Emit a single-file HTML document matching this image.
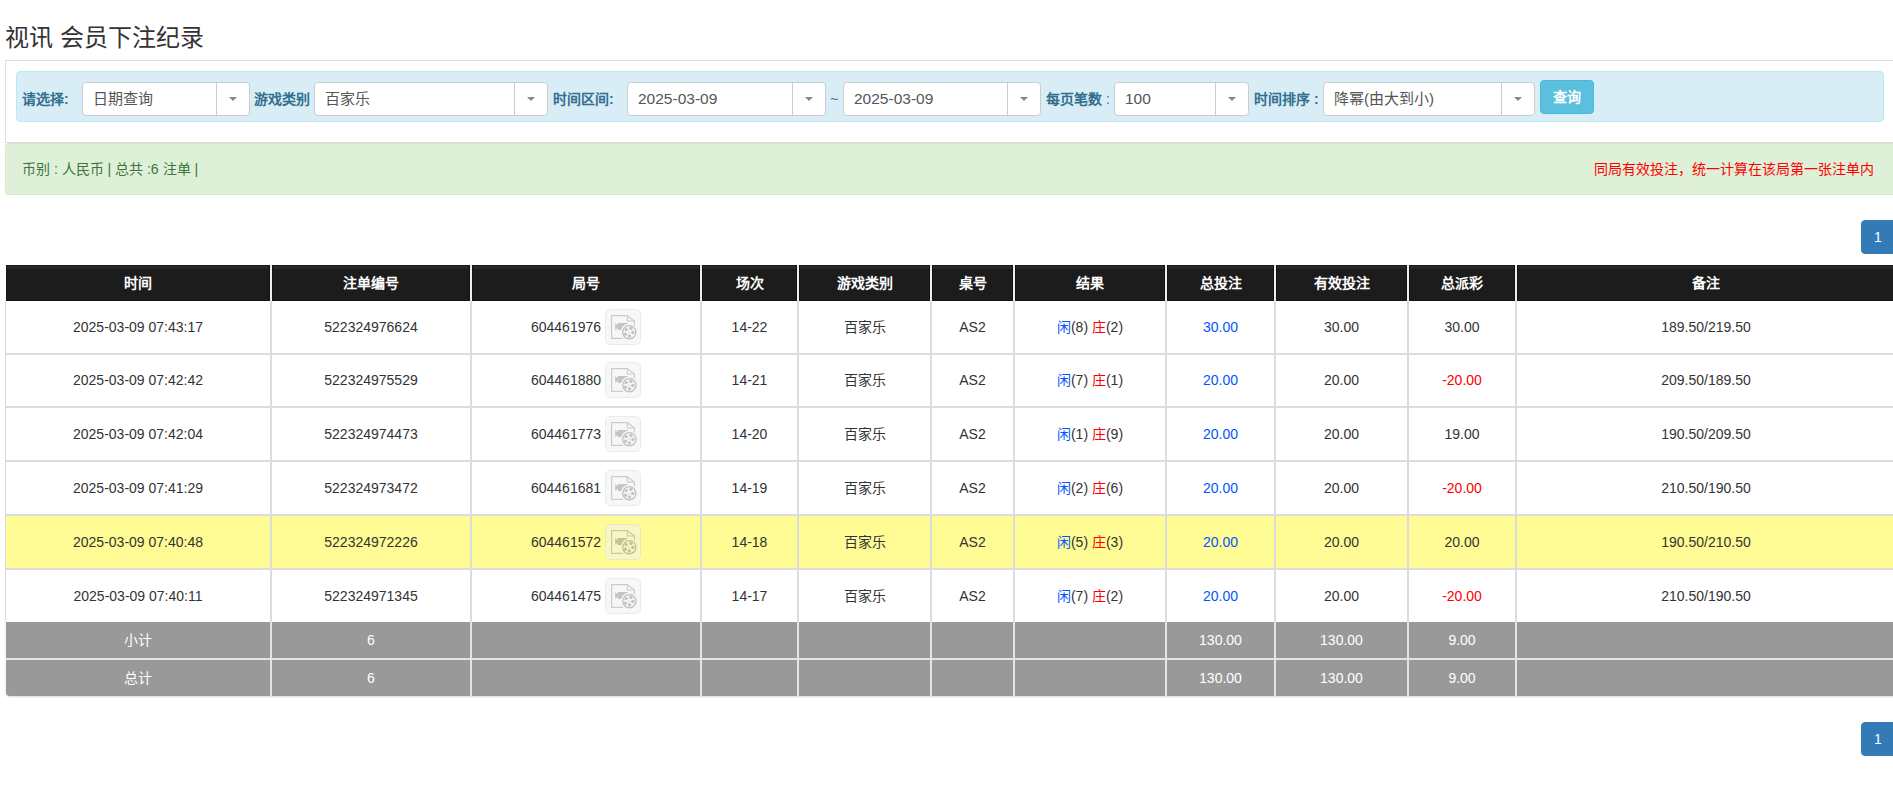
<!DOCTYPE html>
<html lang="zh-CN"><head><meta charset="utf-8">
<style>
html,body{margin:0;padding:0;background:#fff;overflow:hidden;}
body{width:1893px;height:799px;position:relative;font-family:"Liberation Sans",sans-serif;font-size:14px;color:#333;}
.abs{position:absolute;white-space:nowrap;}
.title{left:5px;top:21px;font-size:24px;line-height:34px;color:#333;}
.outer{left:5px;top:60px;width:1888px;height:81px;border:1px solid #ddd;border-right:none;}
.info{left:16px;top:71px;width:1866px;height:49px;border:1px solid #bce8f1;background:#d9edf7;border-radius:4px;}
.lbl{font-weight:bold;color:#31708f;line-height:20px;top:89px;}
.sel{top:82px;height:32px;border:1px solid #ccc;border-radius:4px;background:#fff;}
.sel .t{position:absolute;left:10px;top:6px;line-height:20px;font-size:15px;color:#555;white-space:nowrap;}
.sel .d{position:absolute;right:32px;top:0;bottom:0;width:1px;background:#ccc;}
.sel .c{position:absolute;right:12px;top:14px;width:0;height:0;border-left:4px solid transparent;border-right:4px solid transparent;border-top:4px solid #888;}
.btn{left:1540px;top:80px;width:52px;height:32px;border:1px solid #46b8da;background:#5bc0de;border-radius:4px;color:#fff;font-weight:bold;text-align:center;line-height:32px;}
.alert{left:5px;top:143px;width:1888px;height:50px;border:1px solid #d6e9c6;border-right:none;background:#dff0d8;border-radius:4px 0 0 4px;}
.atext{left:22px;top:159px;line-height:20px;color:#3c763d;}
.red{left:1594px;top:159px;line-height:20px;color:#f00;}
.pg{left:1861px;width:40px;height:32px;border:1px solid #337ab7;background:#337ab7;border-radius:4px 0 0 4px;color:#fff;line-height:32px;}
.pg span{position:absolute;left:12px;top:0;}

.cell{position:absolute;display:flex;align-items:center;justify-content:center;white-space:nowrap;color:#333;line-height:20px;}
.th{color:#fff;font-weight:bold;box-shadow:inset 1px 0 #141414,inset -1px 0 #141414,inset 0 -1px #141414;}
.thbg{background:linear-gradient(#181818 0,#181818 1px,#2c2c2c 1px,#262626 3px,#1c1c1c 5px,#1c1c1c 100%);}
.hsep{width:2px;background:#eeeeee;}
.hl{left:6px;width:1888px;height:2px;background:#dcdcdc;}
.vl{top:301px;height:321px;width:2px;background:#dcdcdc;}
.b{color:#0055ff;}
.r{color:#f00;}
.vid{display:inline-block;width:36px;height:36px;margin-left:4px;vertical-align:middle;}
.vid svg{display:block;}
.num{position:relative;top:1px;}
.ftbg{left:6px;top:622px;width:1888px;height:74px;background:#999;border-radius:0 0 0 4px;box-shadow:0 1px 2px rgba(0,0,0,.15);}
.ft{color:#fff;}
.fsep{top:622px;height:74px;width:2px;background:#e4e4e4;}
.fhsep{left:6px;top:658px;width:1888px;height:2px;background:#e4e4e4;}
</style></head>
<body>
<div class="abs title">视讯 会员下注纪录</div>
<div class="abs outer"></div>
<div class="abs info"></div>
<div class="abs lbl" style="left:22px">请选择:</div>
<div class="abs sel" style="left:82px;width:166px"><span class="t">日期查询</span><i class="d"></i><i class="c"></i></div>
<div class="abs lbl" style="left:254px">游戏类别</div>
<div class="abs sel" style="left:314px;width:232px"><span class="t">百家乐</span><i class="d"></i><i class="c"></i></div>
<div class="abs lbl" style="left:553px">时间区间:</div>
<div class="abs sel" style="left:627px;width:197px"><span class="t" style="font-size:15.5px;top:5.5px">2025-03-09</span><i class="d"></i><i class="c"></i></div>
<div class="abs lbl" style="left:830px;font-weight:normal">~</div>
<div class="abs sel" style="left:843px;width:196px"><span class="t" style="font-size:15.5px;top:5.5px">2025-03-09</span><i class="d"></i><i class="c"></i></div>
<div class="abs lbl" style="left:1046px">每页笔数 <span style="font-weight:normal">:</span></div>
<div class="abs sel" style="left:1114px;width:133px"><span class="t" style="font-size:15.5px;top:5.5px">100</span><i class="d"></i><i class="c"></i></div>
<div class="abs lbl" style="left:1254px">时间排序 :</div>
<div class="abs sel" style="left:1323px;width:210px"><span class="t">降幂(由大到小)</span><i class="d"></i><i class="c"></i></div>
<div class="abs btn">查询</div>

<div class="abs alert"></div>
<div class="abs atext">币别 : 人民币 | 总共 :6 注单 |</div>
<div class="abs red">同局有效投注，统一计算在该局第一张注单内</div>

<div class="abs pg" style="top:220px"><span>1</span></div>

<svg width="0" height="0" style="position:absolute"><defs><symbol id="ic" viewBox="0 0 36 36"><g opacity="0.55">
<rect x="0.5" y="0.5" width="35" height="35" rx="4.5" fill="#f2f2f2" stroke="#dcdcdc"/>
<path d="M6.6 6.6H22.3L29.4 12V29.4H6.6Z" fill="none" stroke="#a2a2a2" stroke-width="1.2"/>
<path d="M22.3 6.6V12H29.4" fill="none" stroke="#a2a2a2" stroke-width="1.1"/>
<path d="M10.2 14L12.8 16.3V14H22.8V21.1H12.8V18.8L10.2 21.1Z" fill="#949494"/>
<circle cx="24.3" cy="23.3" r="8.7" fill="#f2f2f2"/>
<circle cx="24.3" cy="23.3" r="6.6" fill="none" stroke="#8e8e8e" stroke-width="1.3"/>
<g fill="#949494"><circle cx="21.1" cy="20.6" r="1.7"/><circle cx="25.9" cy="19.4" r="1.7"/><circle cx="27.8" cy="23.5" r="1.7"/><circle cx="24.4" cy="27.05" r="1.7"/><circle cx="20.4" cy="25.15" r="1.7"/><circle cx="24.0" cy="23.4" r="0.6"/></g>
</g></symbol></defs></svg>
<div class="abs thbg" style="left:6px;top:265px;width:1888px;height:36px"></div>
<div class="cell th" style="left:6px;top:265px;width:264px;height:36px">时间</div>
<div class="cell th" style="left:272px;top:265px;width:198px;height:36px">注单编号</div>
<div class="cell th" style="left:472px;top:265px;width:228px;height:36px">局号</div>
<div class="cell th" style="left:702px;top:265px;width:95px;height:36px">场次</div>
<div class="cell th" style="left:799px;top:265px;width:131px;height:36px">游戏类别</div>
<div class="cell th" style="left:932px;top:265px;width:81px;height:36px">桌号</div>
<div class="cell th" style="left:1015px;top:265px;width:150px;height:36px">结果</div>
<div class="cell th" style="left:1167px;top:265px;width:107px;height:36px">总投注</div>
<div class="cell th" style="left:1276px;top:265px;width:131px;height:36px">有效投注</div>
<div class="cell th" style="left:1409px;top:265px;width:106px;height:36px">总派彩</div>
<div class="cell th" style="left:1517px;top:265px;width:378px;height:36px">备注</div>
<div class="abs hsep" style="left:270px;top:265px;height:36px"></div>
<div class="abs hsep" style="left:470px;top:265px;height:36px"></div>
<div class="abs hsep" style="left:700px;top:265px;height:36px"></div>
<div class="abs hsep" style="left:797px;top:265px;height:36px"></div>
<div class="abs hsep" style="left:930px;top:265px;height:36px"></div>
<div class="abs hsep" style="left:1013px;top:265px;height:36px"></div>
<div class="abs hsep" style="left:1165px;top:265px;height:36px"></div>
<div class="abs hsep" style="left:1274px;top:265px;height:36px"></div>
<div class="abs hsep" style="left:1407px;top:265px;height:36px"></div>
<div class="abs hsep" style="left:1515px;top:265px;height:36px"></div>
<div class="cell" style="left:6px;top:301px;width:264px;height:52px"><span>2025-03-09 07:43:17</span></div>
<div class="cell" style="left:272px;top:301px;width:198px;height:52px"><span>522324976624</span></div>
<div class="cell" style="left:472px;top:301px;width:228px;height:52px"><span><span class="num">604461976</span><span class="vid"><svg width="36" height="36"><use href="#ic"/></svg></span></span></div>
<div class="cell" style="left:702px;top:301px;width:95px;height:52px"><span>14-22</span></div>
<div class="cell" style="left:799px;top:301px;width:131px;height:52px"><span>百家乐</span></div>
<div class="cell" style="left:932px;top:301px;width:81px;height:52px"><span>AS2</span></div>
<div class="cell" style="left:1015px;top:301px;width:150px;height:52px"><span><span class="b">闲</span>(8) <span class="r">庄</span>(2)</span></div>
<div class="cell" style="left:1167px;top:301px;width:107px;height:52px"><span><span class="b">30.00</span></span></div>
<div class="cell" style="left:1276px;top:301px;width:131px;height:52px"><span>30.00</span></div>
<div class="cell" style="left:1409px;top:301px;width:106px;height:52px"><span>30.00</span></div>
<div class="cell" style="left:1517px;top:301px;width:378px;height:52px"><span>189.50/219.50</span></div>
<div class="cell" style="left:6px;top:354px;width:264px;height:52px"><span>2025-03-09 07:42:42</span></div>
<div class="cell" style="left:272px;top:354px;width:198px;height:52px"><span>522324975529</span></div>
<div class="cell" style="left:472px;top:354px;width:228px;height:52px"><span><span class="num">604461880</span><span class="vid"><svg width="36" height="36"><use href="#ic"/></svg></span></span></div>
<div class="cell" style="left:702px;top:354px;width:95px;height:52px"><span>14-21</span></div>
<div class="cell" style="left:799px;top:354px;width:131px;height:52px"><span>百家乐</span></div>
<div class="cell" style="left:932px;top:354px;width:81px;height:52px"><span>AS2</span></div>
<div class="cell" style="left:1015px;top:354px;width:150px;height:52px"><span><span class="b">闲</span>(7) <span class="r">庄</span>(1)</span></div>
<div class="cell" style="left:1167px;top:354px;width:107px;height:52px"><span><span class="b">20.00</span></span></div>
<div class="cell" style="left:1276px;top:354px;width:131px;height:52px"><span>20.00</span></div>
<div class="cell" style="left:1409px;top:354px;width:106px;height:52px"><span><span class="r">-20.00</span></span></div>
<div class="cell" style="left:1517px;top:354px;width:378px;height:52px"><span>209.50/189.50</span></div>
<div class="cell" style="left:6px;top:408px;width:264px;height:52px"><span>2025-03-09 07:42:04</span></div>
<div class="cell" style="left:272px;top:408px;width:198px;height:52px"><span>522324974473</span></div>
<div class="cell" style="left:472px;top:408px;width:228px;height:52px"><span><span class="num">604461773</span><span class="vid"><svg width="36" height="36"><use href="#ic"/></svg></span></span></div>
<div class="cell" style="left:702px;top:408px;width:95px;height:52px"><span>14-20</span></div>
<div class="cell" style="left:799px;top:408px;width:131px;height:52px"><span>百家乐</span></div>
<div class="cell" style="left:932px;top:408px;width:81px;height:52px"><span>AS2</span></div>
<div class="cell" style="left:1015px;top:408px;width:150px;height:52px"><span><span class="b">闲</span>(1) <span class="r">庄</span>(9)</span></div>
<div class="cell" style="left:1167px;top:408px;width:107px;height:52px"><span><span class="b">20.00</span></span></div>
<div class="cell" style="left:1276px;top:408px;width:131px;height:52px"><span>20.00</span></div>
<div class="cell" style="left:1409px;top:408px;width:106px;height:52px"><span>19.00</span></div>
<div class="cell" style="left:1517px;top:408px;width:378px;height:52px"><span>190.50/209.50</span></div>
<div class="cell" style="left:6px;top:462px;width:264px;height:52px"><span>2025-03-09 07:41:29</span></div>
<div class="cell" style="left:272px;top:462px;width:198px;height:52px"><span>522324973472</span></div>
<div class="cell" style="left:472px;top:462px;width:228px;height:52px"><span><span class="num">604461681</span><span class="vid"><svg width="36" height="36"><use href="#ic"/></svg></span></span></div>
<div class="cell" style="left:702px;top:462px;width:95px;height:52px"><span>14-19</span></div>
<div class="cell" style="left:799px;top:462px;width:131px;height:52px"><span>百家乐</span></div>
<div class="cell" style="left:932px;top:462px;width:81px;height:52px"><span>AS2</span></div>
<div class="cell" style="left:1015px;top:462px;width:150px;height:52px"><span><span class="b">闲</span>(2) <span class="r">庄</span>(6)</span></div>
<div class="cell" style="left:1167px;top:462px;width:107px;height:52px"><span><span class="b">20.00</span></span></div>
<div class="cell" style="left:1276px;top:462px;width:131px;height:52px"><span>20.00</span></div>
<div class="cell" style="left:1409px;top:462px;width:106px;height:52px"><span><span class="r">-20.00</span></span></div>
<div class="cell" style="left:1517px;top:462px;width:378px;height:52px"><span>210.50/190.50</span></div>
<div class="abs" style="left:6px;top:516px;width:1888px;height:52px;background:#fffc95"></div>
<div class="cell" style="left:6px;top:516px;width:264px;height:52px"><span>2025-03-09 07:40:48</span></div>
<div class="cell" style="left:272px;top:516px;width:198px;height:52px"><span>522324972226</span></div>
<div class="cell" style="left:472px;top:516px;width:228px;height:52px"><span><span class="num">604461572</span><span class="vid y"><svg width="36" height="36"><use href="#ic"/></svg></span></span></div>
<div class="cell" style="left:702px;top:516px;width:95px;height:52px"><span>14-18</span></div>
<div class="cell" style="left:799px;top:516px;width:131px;height:52px"><span>百家乐</span></div>
<div class="cell" style="left:932px;top:516px;width:81px;height:52px"><span>AS2</span></div>
<div class="cell" style="left:1015px;top:516px;width:150px;height:52px"><span><span class="b">闲</span>(5) <span class="r">庄</span>(3)</span></div>
<div class="cell" style="left:1167px;top:516px;width:107px;height:52px"><span><span class="b">20.00</span></span></div>
<div class="cell" style="left:1276px;top:516px;width:131px;height:52px"><span>20.00</span></div>
<div class="cell" style="left:1409px;top:516px;width:106px;height:52px"><span>20.00</span></div>
<div class="cell" style="left:1517px;top:516px;width:378px;height:52px"><span>190.50/210.50</span></div>
<div class="cell" style="left:6px;top:570px;width:264px;height:52px"><span>2025-03-09 07:40:11</span></div>
<div class="cell" style="left:272px;top:570px;width:198px;height:52px"><span>522324971345</span></div>
<div class="cell" style="left:472px;top:570px;width:228px;height:52px"><span><span class="num">604461475</span><span class="vid"><svg width="36" height="36"><use href="#ic"/></svg></span></span></div>
<div class="cell" style="left:702px;top:570px;width:95px;height:52px"><span>14-17</span></div>
<div class="cell" style="left:799px;top:570px;width:131px;height:52px"><span>百家乐</span></div>
<div class="cell" style="left:932px;top:570px;width:81px;height:52px"><span>AS2</span></div>
<div class="cell" style="left:1015px;top:570px;width:150px;height:52px"><span><span class="b">闲</span>(7) <span class="r">庄</span>(2)</span></div>
<div class="cell" style="left:1167px;top:570px;width:107px;height:52px"><span><span class="b">20.00</span></span></div>
<div class="cell" style="left:1276px;top:570px;width:131px;height:52px"><span>20.00</span></div>
<div class="cell" style="left:1409px;top:570px;width:106px;height:52px"><span><span class="r">-20.00</span></span></div>
<div class="cell" style="left:1517px;top:570px;width:378px;height:52px"><span>210.50/190.50</span></div>
<div class="abs hl" style="top:353px"></div>
<div class="abs hl" style="top:406px"></div>
<div class="abs hl" style="top:460px"></div>
<div class="abs hl" style="top:514px"></div>
<div class="abs hl" style="top:568px"></div>
<div class="abs vl" style="left:270px"></div>
<div class="abs vl" style="left:470px"></div>
<div class="abs vl" style="left:700px"></div>
<div class="abs vl" style="left:797px"></div>
<div class="abs vl" style="left:930px"></div>
<div class="abs vl" style="left:1013px"></div>
<div class="abs vl" style="left:1165px"></div>
<div class="abs vl" style="left:1274px"></div>
<div class="abs vl" style="left:1407px"></div>
<div class="abs vl" style="left:1515px"></div>
<div class="abs" style="left:5px;top:301px;width:1px;height:321px;background:#dcdcdc"></div>
<div class="abs ftbg"></div>
<div class="cell ft" style="left:6px;top:622px;width:264px;height:36px">小计</div>
<div class="cell ft" style="left:272px;top:622px;width:198px;height:36px">6</div>
<div class="cell ft" style="left:1167px;top:622px;width:107px;height:36px">130.00</div>
<div class="cell ft" style="left:1276px;top:622px;width:131px;height:36px">130.00</div>
<div class="cell ft" style="left:1409px;top:622px;width:106px;height:36px">9.00</div>
<div class="cell ft" style="left:6px;top:660px;width:264px;height:36px">总计</div>
<div class="cell ft" style="left:272px;top:660px;width:198px;height:36px">6</div>
<div class="cell ft" style="left:1167px;top:660px;width:107px;height:36px">130.00</div>
<div class="cell ft" style="left:1276px;top:660px;width:131px;height:36px">130.00</div>
<div class="cell ft" style="left:1409px;top:660px;width:106px;height:36px">9.00</div>
<div class="abs fsep" style="left:270px"></div>
<div class="abs fsep" style="left:470px"></div>
<div class="abs fsep" style="left:700px"></div>
<div class="abs fsep" style="left:797px"></div>
<div class="abs fsep" style="left:930px"></div>
<div class="abs fsep" style="left:1013px"></div>
<div class="abs fsep" style="left:1165px"></div>
<div class="abs fsep" style="left:1274px"></div>
<div class="abs fsep" style="left:1407px"></div>
<div class="abs fsep" style="left:1515px"></div>
<div class="abs fhsep"></div>

<div class="abs pg" style="top:722px"><span>1</span></div>
</body></html>
